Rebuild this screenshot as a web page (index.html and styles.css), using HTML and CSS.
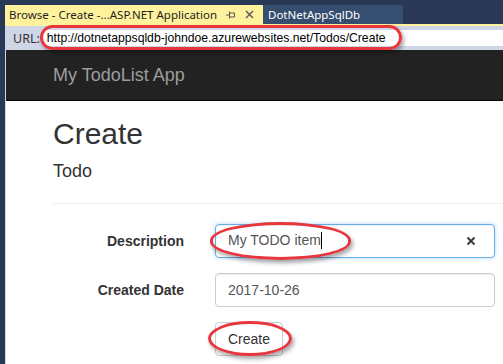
FILE: index.html
```html
<!DOCTYPE html>
<html lang="en">

<head>
    <meta charset="UTF-8">
    <title>Browse - Create</title>
    <link rel="stylesheet" href="styles.css">
</head>

<body>
    <div class="window">
        <div class="tabs">
            <div class="tab active">
                <span class="tab-title">Browse - Create -...ASP.NET Application</span>
                <svg class="pin" width="10" height="8" viewBox="0 0 10 8">
                    <path d="M0 4h3.5M3.5 0.5v7M3.5 2h5v4h-5" fill="none" stroke="#555" stroke-width="1"/>
                </svg>
                <svg class="tab-close" width="9" height="9" viewBox="0 0 9 9">
                    <path d="M1 1l7 7M8 1l-7 7" stroke="#555" stroke-width="1.4"/>
                </svg>
            </div>
            <div class="tab">DotNetAppSqlDb</div>
        </div>

        <div class="urlbar">
            <span class="url-label">URL:</span>
            <div class="url-field">http://dotnetappsqldb-johndoe.azurewebsites.net/Todos/Create</div>
        </div>

        <div class="browser">
            <nav class="navbar">
                <a class="brand" href="#">My TodoList App</a>
            </nav>

            <div class="container">
                <h2>Create</h2>
                <h4>Todo</h4>
                <hr>

                <div class="form">
                    <label class="form-label">Description</label>
                    <div class="form-control focused">
                        <span>My TODO item<span class="caret"></span></span>
                        <svg class="clear" width="10" height="10" viewBox="0 0 10 10">
                            <path d="M1.5 1.5l7 7M8.5 1.5l-7 7" stroke="#333" stroke-width="1.8"/>
                        </svg>
                    </div>

                    <label class="form-label">Created Date</label>
                    <div class="form-control">2017-10-26</div>

                    <span></span>
                    <div><button class="btn">Create</button></div>
                </div>
            </div>
        </div>

        <!-- red annotation marks -->
        <div class="mark mark-url"></div>
        <div class="mark mark-desc"></div>
        <div class="mark mark-btn"></div>
    </div>
</body>

</html>
```

FILE: styles.css
```css
* {
    box-sizing: border-box;
    margin: 0;
    padding: 0;
}

body {
    background: #293955;
    width: 503px;
    height: 364px;
    overflow: hidden;
    font-family: 'Liberation Sans', Arial, sans-serif;
    font-size: 14px;
    color: #333;
}

.window {
    position: relative;
    padding: 5px 0 0 5px;
    height: 364px;
}

/* VS document tabs */
.tabs {
    display: flex;
    height: 19px;
    font-family: 'Noto Sans', sans-serif;
    font-size: 11.5px;
}

.tab {
    display: flex;
    align-items: center;
    padding: 0 5px;
    background: #364e6f;
    color: #fff;
    width: 140px;
}

.tab.active {
    background: #fff29d;
    color: #1e1e1e;
    width: 258px;
    padding-left: 4px;
}

.tab-title {
    flex: 1;
    white-space: nowrap;
}

.pin {
    margin-right: 9px;
}

.tab-close {
    margin-right: 4px;
}

.urlbar {
    display: flex;
    align-items: center;
    height: 26px;
    background: #cfd6e5;
    border-top: 2px solid #fff29d;
    padding-left: 8px;
    font-family: 'Noto Sans', sans-serif;
    font-size: 12.5px;
    color: #1e1e1e;
}

.url-label {
    color: #333;
    margin-right: 3px;
}

.url-field {
    flex: 1;
    height: 16px;
    line-height: 16px;
    background: #fff;
    padding-left: 4px;
    font-family: 'Liberation Sans', Arial, sans-serif;
    font-size: 12.2px;
    color: #000;
}

/* page inside the browser */
.browser {
    background: #fff;
    border-left: 1px solid #d0d4dc;
    height: 314px;
}

.navbar {
    height: 51px;
    background: #222;
    border-bottom: 1px solid #080808;
}

.brand {
    display: block;
    padding: 15px 0 0 47px;
    line-height: 20px;
    font-size: 18px;
    color: #9d9d9d;
    text-decoration: none;
}

.container {
    padding-left: 47px;
}

h2 {
    font-size: 30px;
    font-weight: 500;
    line-height: 1.1;
    margin-top: 16px;
}

h4 {
    font-size: 18px;
    font-weight: 500;
    line-height: 1.1;
    margin-top: 12px;
}

hr {
    border: 0;
    border-top: 1px solid #eee;
    margin: 21px 0 20px;
}

.form {
    display: grid;
    grid-template-columns: 131px 280px;
    column-gap: 31px;
    row-gap: 15px;
}

.form-label {
    font-weight: bold;
    text-align: right;
    padding-top: 7px;
    line-height: 20px;
}

.form-control {
    display: flex;
    align-items: center;
    justify-content: space-between;
    height: 34px;
    padding: 6px 12px;
    border: 1px solid #ccc;
    border-radius: 4px;
    color: #555;
    box-shadow: inset 0 1px 1px rgba(0, 0, 0, .075);
}

.form-control.focused {
    border-color: #66afe9;
    box-shadow: inset 0 1px 1px rgba(0, 0, 0, .075), 0 0 4px rgba(102, 175, 233, .5);
    padding-right: 18px;
}

.caret {
    display: inline-block;
    width: 1px;
    height: 17px;
    background: #000;
    vertical-align: -4px;
}

.btn {
    height: 34px;
    padding: 6px 12px;
    font-family: inherit;
    font-size: 14px;
    line-height: 20px;
    color: #333;
    background: #fff;
    border: 1px solid #ccc;
    border-radius: 4px;
}

/* annotation ovals */
.mark {
    position: absolute;
    border: 3px solid #e8363e;
    box-shadow: 2px 3px 4px rgba(0, 0, 0, .35);
}

.mark-url {
    left: 40px;
    top: 25px;
    width: 362px;
    height: 25px;
    border-radius: 13px;
}

.mark-desc {
    left: 210px;
    top: 222px;
    width: 141px;
    height: 38px;
    border-radius: 50% / 48%;
}

.mark-btn {
    left: 208px;
    top: 321px;
    width: 84px;
    height: 35px;
    border-radius: 50% / 50%;
}
```
